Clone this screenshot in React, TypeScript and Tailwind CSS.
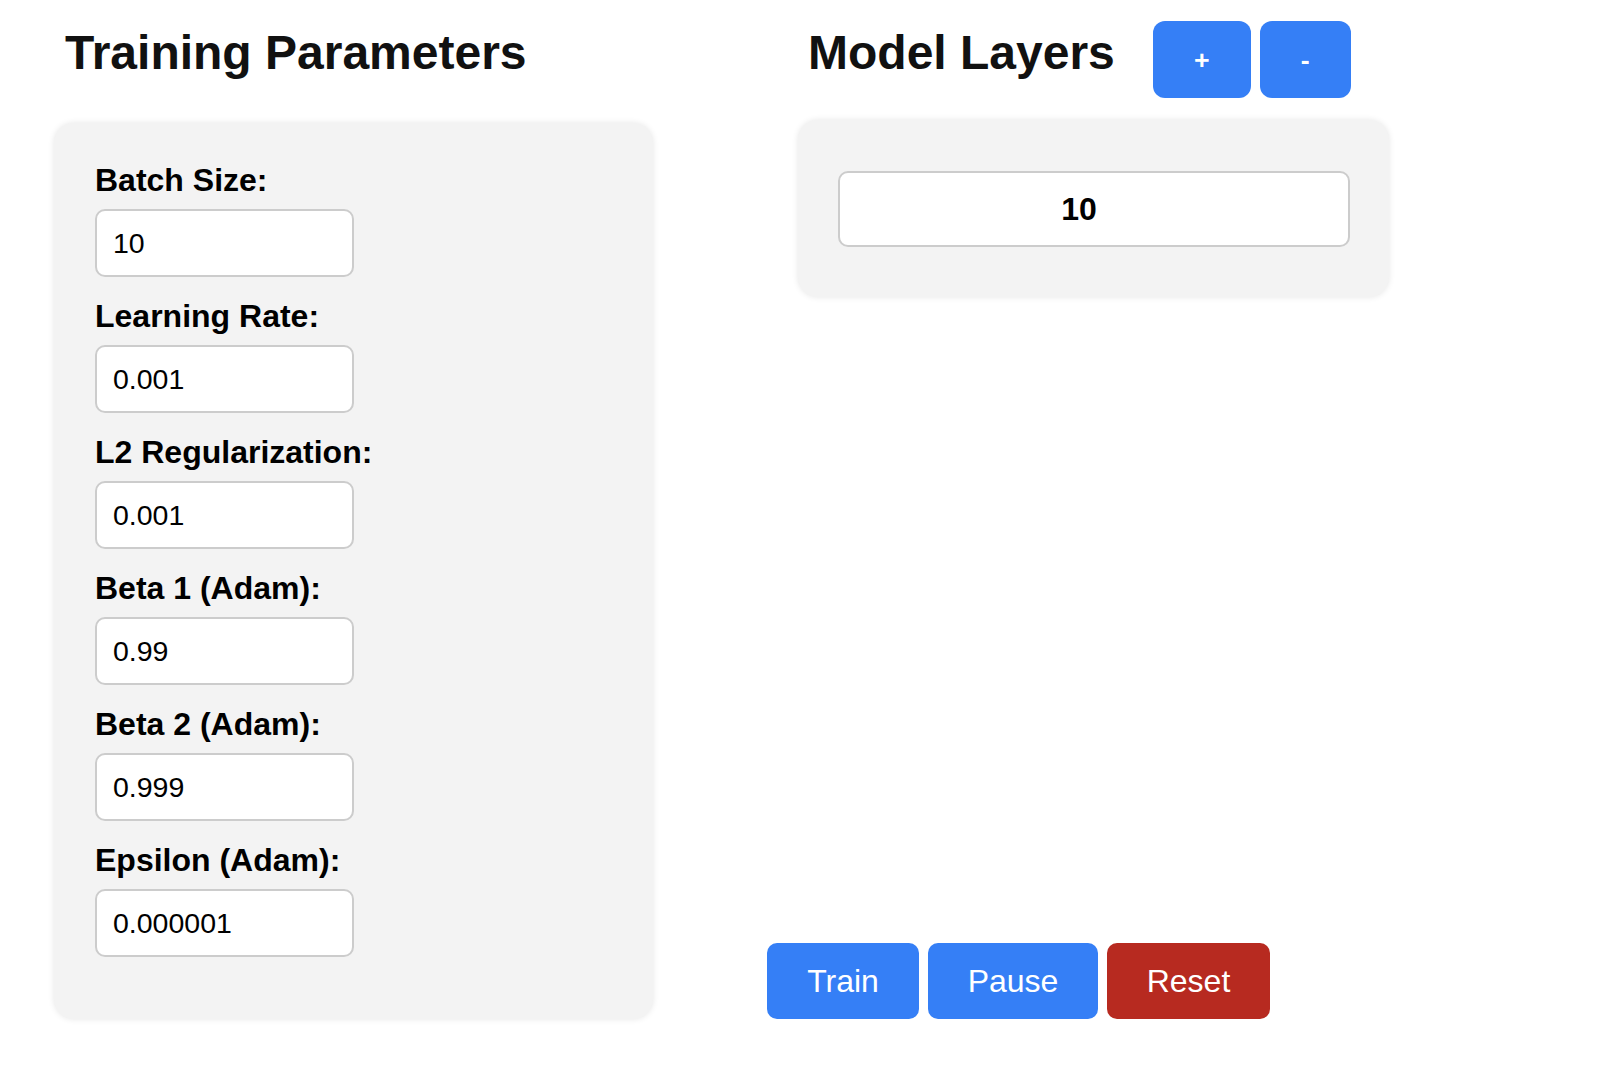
import { useState } from "react"

const fields = [
  { label: "Batch Size:", value: "10" },
  { label: "Learning Rate:", value: "0.001" },
  { label: "L2 Regularization:", value: "0.001" },
  { label: "Beta 1 (Adam):", value: "0.99" },
  { label: "Beta 2 (Adam):", value: "0.999" },
  { label: "Epsilon (Adam):", value: "0.000001" },
]

export default function App() {
  const [layers, setLayers] = useState(10)
  const [params, setParams] = useState(fields.map((f) => f.value))

  return (
    <div className="min-h-screen bg-white text-black font-['Liberation_Sans',Arial,sans-serif]">
      <div className="flex">
        {/* Training parameters */}
        <div className="ml-[54px] w-[599px] flex flex-col">
          <h2 className="ml-[11px] mt-[25px] text-[48px] leading-[56px] font-bold text-[#111]">Training Parameters</h2>
          <div className="mt-[42px] rounded-[20px] bg-[#f3f3f3] px-[41px] pt-[39px] pb-[41px] shadow-[0_0_6px_rgba(0,0,0,0.1)]">
            {fields.map((f, i) => (
              <div key={f.label} className="flex flex-col">
                <label className="text-[32px] leading-[37px] font-bold mb-[10px]">{f.label}</label>
                <input
                  type="text"
                  value={params[i]}
                  onChange={(e) => setParams(params.map((p, j) => (j === i ? e.target.value : p)))}
                  className="w-[259px] h-[68px] mb-[21px] rounded-[10px] border-2 border-[#cccccc] bg-white pl-[16px] text-[28.5px] text-black outline-none font-['Liberation_Sans',Arial,sans-serif]"
                />
              </div>
            ))}
          </div>
        </div>

        {/* Model layers */}
        <div className="ml-[114px] w-[623px] flex flex-col">
          <div className="flex items-start pt-[21px]">
            <h2 className="ml-[41px] mt-[4px] text-[48px] leading-[56px] font-bold text-[#111]">Model Layers</h2>
            <button
              onClick={() => setLayers(layers + 1)}
              className="ml-[38px] w-[98px] h-[77px] rounded-[12px] bg-[#357ff6] text-white text-[26.67px] font-bold"
            >
              +
            </button>
            <button
              onClick={() => setLayers(Math.max(0, layers - 1))}
              className="ml-[9px] w-[91px] h-[77px] rounded-[12px] bg-[#357ff6] text-white text-[26.67px] font-bold"
            >
              -
            </button>
          </div>
          <div className="ml-[31px] mt-[22px] w-[591px] rounded-[20px] bg-[#f3f3f3] pl-[40px] pr-[39px] pt-[51px] pb-[50px] shadow-[0_0_6px_rgba(0,0,0,0.1)]">
            <div className="w-[512px] h-[76px] rounded-[10px] border-2 border-[#cccccc] bg-white flex items-center justify-center pr-[30px] text-[32px] font-bold">
              {layers}
            </div>
          </div>

          <div className="mt-auto flex gap-[9px]">
            <button className="h-[76px] w-[152px] rounded-[10px] bg-[#357ff6] text-white text-[32px]">Train</button>
            <button className="h-[76px] w-[170px] rounded-[10px] bg-[#357ff6] text-white text-[32px]">Pause</button>
            <button className="h-[76px] w-[163px] rounded-[10px] bg-[#b72a20] text-white text-[32px]">Reset</button>
          </div>
        </div>
      </div>
    </div>
  )
}
